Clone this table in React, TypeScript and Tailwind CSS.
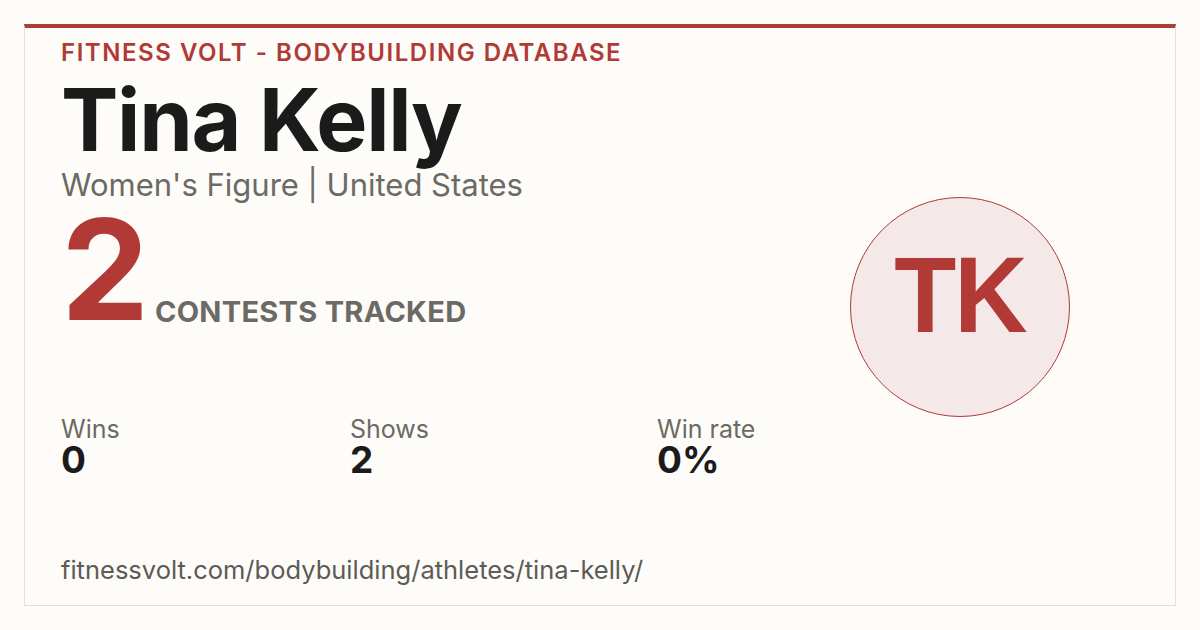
export default function App() {
  const stats = [
    { label: "Wins", value: "0", w: "w-[289px]" },
    { label: "Shows", value: "2", w: "w-[307px]" },
    { label: "Win rate", value: "0%", w: "" },
  ];

  return (
    <div
      className="w-[1200px] h-[630px] bg-[#fdfcf8] p-6"
      style={{ fontFamily: "Inter, 'Noto Sans', sans-serif" }}
    >
      <div className="h-[582px] border border-[#e3e0d9] border-t-4 border-t-[#b13a36] bg-[#fdfcf8] flex">
        <div className="flex-1 min-w-0 pl-9 pt-[10px] flex flex-col">
          <div className="text-[24px] leading-[30px] font-semibold tracking-[0.064em] text-[#b13a36] whitespace-nowrap">
            FITNESS VOLT - BODYBUILDING DATABASE
          </div>
          <h1 className="mt-[9px] text-[86px] leading-[86px] font-bold tracking-[-0.015em] text-[#1b1b1b] whitespace-nowrap">
            Tina Kelly
          </h1>
          <div className="mt-[4px] text-[31px] leading-[36px] text-[#6b6a64] whitespace-nowrap">
            Women's Figure | United States
          </div>
          <div className="mt-[10px] flex items-end">
            <span className="text-[140px] leading-[112px] font-bold text-[#b13a36] tracking-[-0.03em]">2</span>
            <span className="ml-[10px] mb-[-2px] text-[29px] leading-[30px] font-bold text-[#6b6a64] tracking-[0.01em] whitespace-nowrap">
              CONTESTS TRACKED
            </span>
          </div>
          <div className="mt-[90px] flex">
            {stats.map((s) => (
              <div key={s.label} className={`${s.w} shrink-0 whitespace-nowrap`}>
                <div className="text-[25px] leading-[28px] text-[#6b6a64]">{s.label}</div>
                <div className="text-[37px] leading-[34px] font-bold text-[#1b1b1b]">{s.value}</div>
              </div>
            ))}
          </div>
          <div className="mt-auto mb-[20px] text-[25.5px] leading-[30px] text-[#5c5b56] whitespace-nowrap">
            fitnessvolt.com/bodybuilding/athletes/tina-kelly/
          </div>
        </div>
        <div className="w-[430px] shrink-0 flex justify-center pt-[169px]">
          <div className="w-[220px] h-[220px] rounded-full border border-[#b13a36] bg-[#f4e8e8] flex items-center justify-center pb-[24px]">
            <span
              className="text-[108px] leading-none font-bold text-[#b13a36] tracking-[-0.02em] scale-x-[0.94]"
              style={{ fontFamily: "'Liberation Sans', Arial, sans-serif" }}
            >
              TK
            </span>
          </div>
        </div>
      </div>
    </div>
  );
}
